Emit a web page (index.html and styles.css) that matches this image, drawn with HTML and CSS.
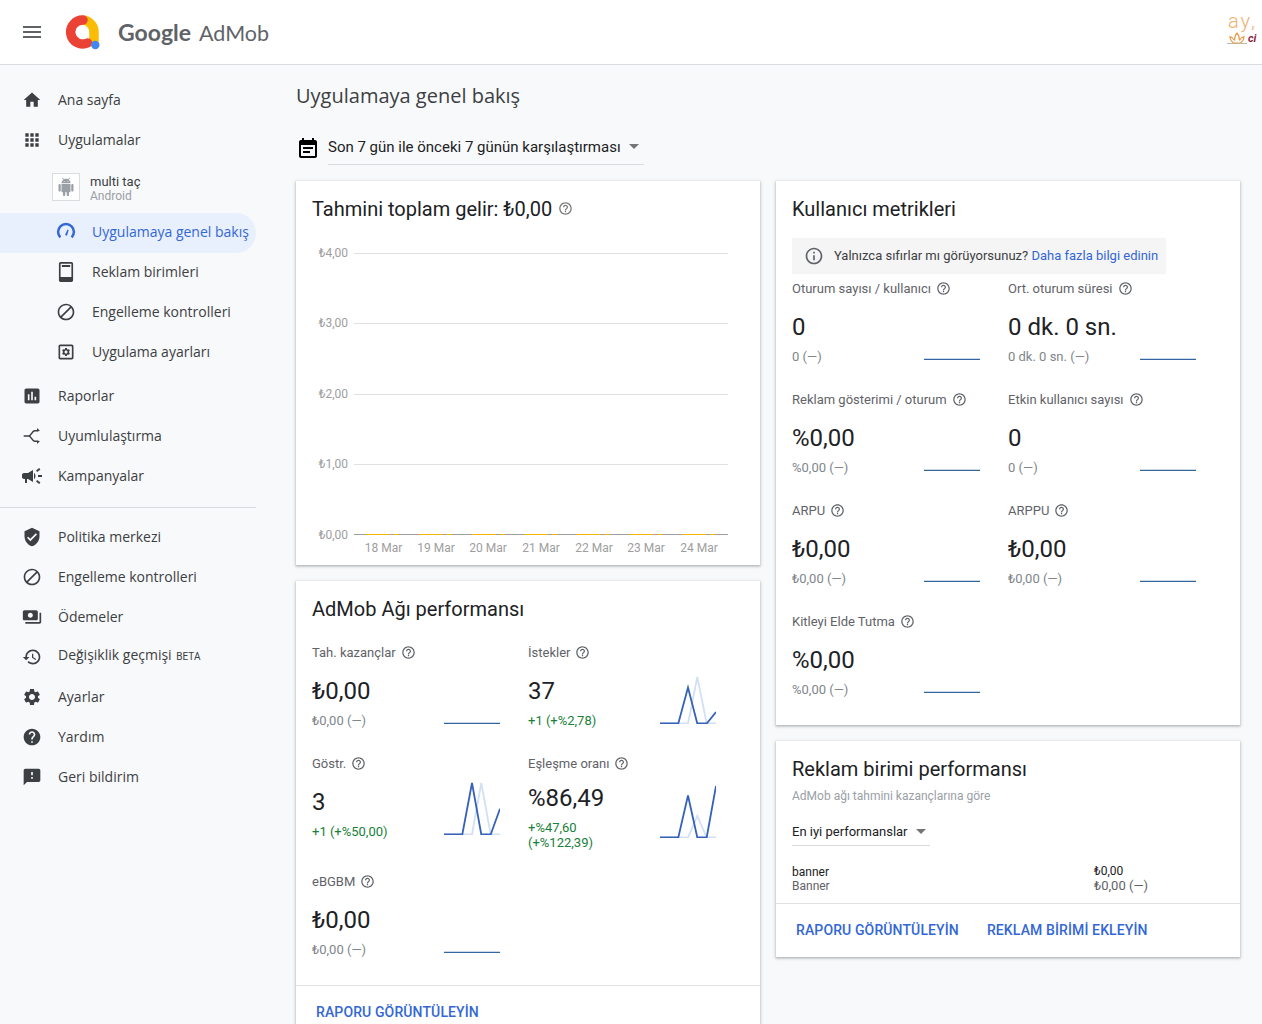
FILE: index.html
```html
<!DOCTYPE html>
<html lang="tr">
<head>
    <meta charset="UTF-8">
    <meta name="viewport" content="width=device-width, initial-scale=1.0">
    <title>Google AdMob</title>
    <link rel="stylesheet" href="styles.css">
</head>
<body>

    <svg class="sprite" width="0" height="0">
        <symbol id="i-help" viewBox="0 0 24 24"><path d="M11 18h2v-2h-2v2zm1-16C6.48 2 2 6.48 2 12s4.48 10 10 10 10-4.48 10-10S17.52 2 12 2zm0 18c-4.41 0-8-3.59-8-8s3.59-8 8-8 8 3.59 8 8-3.59 8-8 8zm0-14c-2.21 0-4 1.79-4 4h2c0-1.1.9-2 2-2s2 .9 2 2c0 2-3 1.75-3 5h2c0-2.25 3-2.5 3-5 0-2.21-1.79-4-4-4z"/></symbol>
        <symbol id="i-block" viewBox="0 0 24 24"><path d="M12 2C6.48 2 2 6.48 2 12s4.48 10 10 10 10-4.48 10-10S17.52 2 12 2zM4 12c0-4.42 3.58-8 8-8 1.85 0 3.55.63 4.9 1.69L5.69 16.9C4.63 15.55 4 13.85 4 12zm8 8c-1.85 0-3.55-.63-4.9-1.69L18.31 7.1C19.37 8.45 20 10.15 20 12c0 4.42-3.58 8-8 8z"/></symbol>
        <symbol id="i-gear" viewBox="0 0 24 24"><path d="M19.14 12.94c.04-.3.06-.61.06-.94 0-.32-.02-.64-.07-.94l2.03-1.58c.18-.14.23-.41.12-.61l-1.92-3.32c-.12-.22-.37-.29-.59-.22l-2.39.96c-.5-.38-1.03-.7-1.62-.94l-.36-2.54c-.04-.24-.24-.41-.48-.41h-3.84c-.24 0-.43.17-.47.41l-.36 2.54c-.59.24-1.13.57-1.62.94l-2.39-.96c-.22-.08-.47 0-.59.22L2.74 8.87c-.12.21-.08.47.12.61l2.03 1.58c-.05.3-.09.63-.09.94s.02.64.07.94l-2.03 1.58c-.18.14-.23.41-.12.61l1.92 3.32c.12.22.37.29.59.22l2.39-.96c.5.38 1.03.7 1.62.94l.36 2.54c.05.24.24.41.48.41h3.84c.24 0 .44-.17.47-.41l.36-2.54c.59-.24 1.13-.56 1.62-.94l2.39.96c.22.08.47 0 .59-.22l1.92-3.32c.12-.22.07-.47-.12-.61l-2.01-1.58zM12 15.6c-1.98 0-3.6-1.62-3.6-3.6s1.62-3.6 3.6-3.6 3.6 1.62 3.6 3.6-1.62 3.6-3.6 3.6z"/></symbol>
        <symbol id="s-flat" viewBox="0 0 56 55"><path class="spark-flat" d="M0 54.5H56"/></symbol>
    </svg>

    <header class="topbar">
        <svg class="menu-icon" viewBox="0 0 24 24"><path d="M3 18h18v-2H3v2zm0-5h18v-2H3v2zm0-7v2h18V6H3z"/></svg>
        <svg class="logo-mark" viewBox="0 0 36 36" fill="none">
            <path d="M17 6A12 12 0 0 1 29 18V29" stroke="#fbbc04" stroke-width="9.5"/>
            <path d="M18 6A12 12 0 1 0 22.5 29" stroke="#ea4335" stroke-width="9.5" stroke-linecap="round"/>
            <circle cx="30.3" cy="31" r="4.2" fill="#4285f4"/>
        </svg>
        <div class="logo-text"><span class="logo-google">Google</span> <span class="logo-admob">AdMob</span></div>
        <div class="avatar">
            <span class="avatar-text">ay,</span>
            <svg class="avatar-lotus" viewBox="0 0 20 13" fill="none">
                <path d="M0 11.500h20" stroke="#b9b9b9"/>
                <path d="M6.500 11C4 9 3 6 3 4.500 5 5 6.500 6.500 7.500 8.500 7.500 5.500 8.500 2.500 10 1c1.500 1.500 2.500 4.500 2.500 7.500C13.500 6.500 15 5 17 4.500 17 6 16 9 13.500 11z" stroke="#e9a04e" stroke-width="1.100"/>
            </svg>
            <span class="avatar-mark">ci</span>
        </div>
    </header>

    <div class="page">
        <nav class="sidebar">
            <a class="nav-item">
                <svg class="nav-icon" viewBox="0 0 24 24"><path d="M10 20v-6h4v6h5v-8h3L12 3 2 12h3v8z"/></svg>
                <span>Ana sayfa</span>
            </a>
            <a class="nav-item">
                <svg class="nav-icon" viewBox="0 0 24 24"><path d="M4 8h4V4H4v4zm6 12h4v-4h-4v4zm-6 0h4v-4H4v4zm0-6h4v-4H4v4zm6 0h4v-4h-4v4zm6-10v4h4V4h-4zm-6 4h4V4h-4v4zm6 6h4v-4h-4v4zm0 6h4v-4h-4v4z"/></svg>
                <span>Uygulamalar</span>
            </a>
            <div class="app-row">
                <div class="app-tile">
                    <svg viewBox="0 0 24 24"><path d="M6 18c0 .55.45 1 1 1h1v3.5c0 .83.67 1.5 1.5 1.5s1.5-.67 1.5-1.5V19h2v3.5c0 .83.67 1.5 1.5 1.5s1.5-.67 1.5-1.5V19h1c.55 0 1-.45 1-1V8H6v10zM3.5 8C2.67 8 2 8.67 2 9.5v7c0 .83.67 1.5 1.5 1.5S5 17.33 5 16.5v-7C5 8.67 4.33 8 3.5 8zm17 0c-.83 0-1.5.67-1.5 1.5v7c0 .83.67 1.5 1.5 1.5s1.5-.67 1.5-1.5v-7c0-.83-.67-1.5-1.5-1.5zm-4.97-5.84l1.3-1.3c.2-.2.2-.51 0-.71-.2-.2-.51-.2-.71 0l-1.48 1.48C13.85 1.23 12.95 1 12 1c-.96 0-1.86.23-2.66.63L7.85.15c-.2-.2-.51-.2-.71 0-.2.2-.2.51 0 .71l1.31 1.31C6.97 3.26 6 5.01 6 7h12c0-1.99-.97-3.75-2.47-4.84zM10 5H9V4h1v1zm5 0h-1V4h1v1z"/></svg>
                </div>
                <div class="app-name">
                    <div>multi taç</div>
                    <div class="app-platform">Android</div>
                </div>
            </div>
            <a class="nav-item sub active">
                <svg class="nav-icon line-icon" viewBox="0 0 24 24"><path d="M5.200 18.500a9.500 9.500 0 1 1 13.600 0" stroke="#3367d6" stroke-width="3"/><path class="needle" d="M10.800 15.500l3-6.500 1.400.6-2 6.800z"/></svg>
                <span>Uygulamaya genel bakış</span>
            </a>
            <a class="nav-item sub">
                <svg class="nav-icon" viewBox="0 0 24 24"><path d="M18.500 0h-13c-1.100 0-2 .9-2 2v20c0 1.100.9 2 2 2h13c1.100 0 2-.9 2-2V2c0-1.100-.9-2-2-2zm0 18h-13V2h13zM7 3.500h10v2.500H7z" fill-rule="evenodd"/></svg>
                <span>Reklam birimleri</span>
            </a>
            <a class="nav-item sub">
                <svg class="nav-icon"><use href="#i-block"/></svg>
                <span>Engelleme kontrolleri</span>
            </a>
            <a class="nav-item sub">
                <svg class="nav-icon" viewBox="0 0 24 24"><path d="M19 3H5c-1.100 0-2 .9-2 2v14c0 1.100.9 2 2 2h14c1.100 0 2-.9 2-2V5c0-1.100-.9-2-2-2zm0 16H5V5h14v14z"/><use href="#i-gear" x="6" y="6" width="12" height="12"/></svg>
                <span>Uygulama ayarları</span>
            </a>
            <a class="nav-item group-start">
                <svg class="nav-icon" viewBox="0 0 24 24"><path d="M19 3H5c-1.100 0-2 .9-2 2v14c0 1.100.9 2 2 2h14c1.100 0 2-.9 2-2V5c0-1.100-.9-2-2-2zM9 17H7v-7h2v7zm4 0h-2V7h2v10zm4 0h-2v-4h2v4z"/></svg>
                <span>Raporlar</span>
            </a>
            <a class="nav-item">
                <svg class="nav-icon line-icon" viewBox="0 0 24 24"><path d="M2 12h6c3 0 3.500-5 7-6.200h3M8 12c3 0 3.500 5 7 6.200h3" stroke="#3c4043" stroke-width="1.800"/><path class="arrow" d="M18 2.500l3.500 3.300-3.500 1.200zM18 17l3.500 1.200-3.500 3.300z"/></svg>
                <span>Uyumlulaştırma</span>
            </a>
            <a class="nav-item">
                <svg class="nav-icon" viewBox="2 2 20 20"><path d="M18 11v2h4v-2h-4zm-2 6.610c.96.71 2.210 1.650 3.200 2.390.4-.53.8-1.070 1.200-1.600-.99-.74-2.240-1.680-3.200-2.400-.4.54-.8 1.080-1.200 1.610zM20.400 5.600c-.4-.53-.8-1.070-1.200-1.600-.99.74-2.240 1.680-3.200 2.400.4.53.8 1.070 1.200 1.600.96-.72 2.210-1.650 3.200-2.400zM4 9c-1.100 0-2 .9-2 2v2c0 1.100.9 2 2 2h1v4h2v-4h1l5 3V6L8 9H4zm11.500 3c0-1.330-.58-2.530-1.500-3.350v6.690c.92-.81 1.500-2.010 1.500-3.340z"/></svg>
                <span>Kampanyalar</span>
            </a>
            <div class="nav-divider"></div>
            <a class="nav-item">
                <svg class="nav-icon" viewBox="0 0 24 24"><path d="M12 1L3 5v6c0 5.550 3.840 10.740 9 12 5.160-1.260 9-6.450 9-12V5l-9-4zm-2 16l-4-4 1.410-1.410L10 14.170l6.590-6.590L18 9l-8 8z"/></svg>
                <span>Politika merkezi</span>
            </a>
            <a class="nav-item">
                <svg class="nav-icon"><use href="#i-block"/></svg>
                <span>Engelleme kontrolleri</span>
            </a>
            <a class="nav-item">
                <svg class="nav-icon" viewBox="0 0 24 24"><path d="M19 14V6c0-1.100-.9-2-2-2H3c-1.100 0-2 .9-2 2v8c0 1.100.9 2 2 2h14c1.100 0 2-.9 2-2zm-9-1c-1.660 0-3-1.340-3-3s1.340-3 3-3 3 1.340 3 3-1.340 3-3 3zm13-6v11c0 1.100-.9 2-2 2H4v-2h17V7h2z"/></svg>
                <span>Ödemeler</span>
            </a>
            <a class="nav-item">
                <svg class="nav-icon" viewBox="0 0 24 24"><path d="M13 3c-4.970 0-9 4.030-9 9H1l3.890 3.890.07.14L9 12H6c0-3.870 3.130-7 7-7s7 3.130 7 7-3.130 7-7 7c-1.930 0-3.680-.79-4.940-2.060l-1.420 1.420C8.270 19.990 10.510 21 13 21c4.970 0 9-4.030 9-9s-4.030-9-9-9zm-1 5v5l4.280 2.540.72-1.210-3.500-2.080V8H12z"/></svg>
                <span class="raised">Değişiklik geçmişi <small class="beta">BETA</small></span>
            </a>
            <a class="nav-item">
                <svg class="nav-icon"><use href="#i-gear"/></svg>
                <span>Ayarlar</span>
            </a>
            <a class="nav-item">
                <svg class="nav-icon" viewBox="0 0 24 24"><path d="M12 2C6.480 2 2 6.480 2 12s4.480 10 10 10 10-4.480 10-10S17.520 2 12 2zm1 17h-2v-2h2v2zm2.070-7.750l-.9.92C13.450 12.900 13 13.500 13 15h-2v-.5c0-1.100.45-2.100 1.170-2.830l1.240-1.260c.37-.36.59-.86.59-1.410 0-1.100-.9-2-2-2s-2 .9-2 2H8c0-2.210 1.790-4 4-4s4 1.790 4 4c0 .88-.36 1.680-.93 2.250z"/></svg>
                <span>Yardım</span>
            </a>
            <a class="nav-item">
                <svg class="nav-icon" viewBox="0 0 24 24"><path d="M20 2H4c-1.100 0-1.990.9-1.990 2L2 22l4-4h14c1.100 0 2-.9 2-2V4c0-1.100-.9-2-2-2zm-7 12h-2v-2h2v2zm0-4h-2V6h2v4z"/></svg>
                <span>Geri bildirim</span>
            </a>
        </nav>

        <main class="content">
            <h1 class="page-title">Uygulamaya genel bakış</h1>
            <div class="date-row">
                <svg class="date-icon" viewBox="0 0 24 24"><path d="M17 10H7v2h10v-2zm2-7h-1V1h-2v2H8V1H6v2H5c-1.110 0-1.990.9-1.990 2L3 19c0 1.100.89 2 2 2h14c1.100 0 2-.9 2-2V5c0-1.100-.9-2-2-2zm0 16H5V8h14v11zm-5-5H7v2h7v-2z"/></svg>
                <div class="date-select">
                    <span>Son 7 gün ile önceki 7 günün karşılaştırması</span>
                    <i class="caret"></i>
                </div>
            </div>

            <div class="columns">
                <div class="column">
                    <section class="card">
                        <h2 class="card-title">Tahmini toplam gelir: ₺0,00 <svg class="title-help"><use href="#i-help"/></svg></h2>
                        <svg class="chart" viewBox="0 0 464 342">
                            <g class="grid-lines">
                                <path d="M58 30.500H432M58 100.500H432M58 171.500H432M58 241.500H432"/>
                            </g>
                            <path class="axis-line" d="M58 311.500H432"/>
                            <path class="rev-line" d="M69.700 311.500h24M97.700 311.500h5M122.800 311.500h24M150.800 311.500h5M175.700 311.500h24M203.700 311.500h5M228.300 311.500h24M256.300 311.500h5M280.700 311.500h24M308.700 311.500h5M333.300 311.500h24M361.300 311.500h5M386 311.500h24M414 311.500h5"/>
                            <g class="chart-y">
                                <text x="52" y="34">₺4,00</text>
                                <text x="52" y="104">₺3,00</text>
                                <text x="52" y="175">₺2,00</text>
                                <text x="52" y="245">₺1,00</text>
                                <text x="52" y="316">₺0,00</text>
                            </g>
                            <g class="chart-x">
                                <text x="87.500" y="329">18 Mar</text>
                                <text x="140" y="329">19 Mar</text>
                                <text x="192" y="329">20 Mar</text>
                                <text x="245" y="329">21 Mar</text>
                                <text x="298" y="329">22 Mar</text>
                                <text x="350" y="329">23 Mar</text>
                                <text x="403" y="329">24 Mar</text>
                            </g>
                        </svg>
                    </section>

                    <section class="card">
                        <h2 class="card-title network-title">AdMob Ağı performansı</h2>
                        <div class="metrics network-metrics">
                            <div class="metric">
                                <div class="metric-label">Tah. kazançlar <svg class="help"><use href="#i-help"/></svg></div>
                                <div class="metric-body">
                                    <div>
                                        <div class="metric-value">₺0,00</div>
                                        <div class="metric-sub">₺0,00 (—)</div>
                                    </div>
                                    <svg class="spark"><use href="#s-flat"/></svg>
                                </div>
                            </div>
                            <div class="metric">
                                <div class="metric-label">İstekler <svg class="help"><use href="#i-help"/></svg></div>
                                <div class="metric-body">
                                    <div>
                                        <div class="metric-value">37</div>
                                        <div class="metric-sub up">+1 (+%2,78)</div>
                                    </div>
                                    <svg class="spark" viewBox="0 0 56 55">
                                        <path class="spark-prev" d="M0 54.500H28L37.300 8 46.700 54.500H56"/>
                                        <path class="spark-line" d="M0 54.500H18.300L28 18.500 37.300 54.500H46.700L56 43"/>
                                    </svg>
                                </div>
                            </div>
                            <div class="metric">
                                <div class="metric-label">Göstr. <svg class="help"><use href="#i-help"/></svg></div>
                                <div class="metric-body">
                                    <div>
                                        <div class="metric-value">3</div>
                                        <div class="metric-sub up">+1 (+%50,00)</div>
                                    </div>
                                    <svg class="spark" viewBox="0 0 56 55">
                                        <path class="spark-prev" d="M0 54.500H28L37.300 3 46.700 54.500H56"/>
                                        <path class="spark-line" d="M0 54.500H18.300L28 3 37.300 54.500H46.700L56 28.700"/>
                                    </svg>
                                </div>
                            </div>
                            <div class="metric metric-wrapped">
                                <div class="metric-label">Eşleşme oranı <svg class="help"><use href="#i-help"/></svg></div>
                                <div class="metric-body">
                                    <div>
                                        <div class="metric-value">%86,49</div>
                                        <div class="metric-sub up">+%47,60<br>(+%122,39)</div>
                                    </div>
                                    <svg class="spark" viewBox="0 0 56 55">
                                        <path class="spark-prev" d="M0 54.500H28L37.300 33 46.700 54.500H56"/>
                                        <path class="spark-line" d="M0 54.500H18.300L28 12.500 37.300 54.500H46.700L56 3"/>
                                    </svg>
                                </div>
                            </div>
                            <div class="metric">
                                <div class="metric-label">eBGBM <svg class="help"><use href="#i-help"/></svg></div>
                                <div class="metric-body">
                                    <div>
                                        <div class="metric-value">₺0,00</div>
                                        <div class="metric-sub">₺0,00 (—)</div>
                                    </div>
                                    <svg class="spark"><use href="#s-flat"/></svg>
                                </div>
                            </div>
                        </div>
                        <div class="card-actions">
                            <a class="action">RAPORU GÖRÜNTÜLEYİN</a>
                        </div>
                    </section>
                </div>

                <div class="column">
                    <section class="card">
                        <h2 class="card-title">Kullanıcı metrikleri</h2>
                        <div class="notice">
                            <svg class="notice-icon" viewBox="0 0 24 24"><path d="M11 7h2v2h-2zm0 4h2v6h-2zm1-9C6.480 2 2 6.480 2 12s4.480 10 10 10 10-4.480 10-10S17.520 2 12 2zm0 18c-4.410 0-8-3.590-8-8s3.590-8 8-8 8 3.590 8 8-3.590 8-8 8z"/></svg>
                            <span>Yalnızca sıfırlar mı görüyorsunuz? <a class="notice-link">Daha fazla bilgi edinin</a></span>
                        </div>
                        <div class="metrics user-metrics">
                            <div class="metric">
                                <div class="metric-label">Oturum sayısı / kullanıcı <svg class="help"><use href="#i-help"/></svg></div>
                                <div class="metric-body">
                                    <div>
                                        <div class="metric-value">0</div>
                                        <div class="metric-sub">0 (—)</div>
                                    </div>
                                    <svg class="spark"><use href="#s-flat"/></svg>
                                </div>
                            </div>
                            <div class="metric">
                                <div class="metric-label">Ort. oturum süresi <svg class="help"><use href="#i-help"/></svg></div>
                                <div class="metric-body">
                                    <div>
                                        <div class="metric-value">0 dk. 0 sn.</div>
                                        <div class="metric-sub">0 dk. 0 sn. (—)</div>
                                    </div>
                                    <svg class="spark"><use href="#s-flat"/></svg>
                                </div>
                            </div>
                            <div class="metric">
                                <div class="metric-label">Reklam gösterimi / oturum <svg class="help"><use href="#i-help"/></svg></div>
                                <div class="metric-body">
                                    <div>
                                        <div class="metric-value">%0,00</div>
                                        <div class="metric-sub">%0,00 (—)</div>
                                    </div>
                                    <svg class="spark"><use href="#s-flat"/></svg>
                                </div>
                            </div>
                            <div class="metric">
                                <div class="metric-label">Etkin kullanıcı sayısı <svg class="help"><use href="#i-help"/></svg></div>
                                <div class="metric-body">
                                    <div>
                                        <div class="metric-value">0</div>
                                        <div class="metric-sub">0 (—)</div>
                                    </div>
                                    <svg class="spark"><use href="#s-flat"/></svg>
                                </div>
                            </div>
                            <div class="metric">
                                <div class="metric-label">ARPU <svg class="help"><use href="#i-help"/></svg></div>
                                <div class="metric-body">
                                    <div>
                                        <div class="metric-value">₺0,00</div>
                                        <div class="metric-sub">₺0,00 (—)</div>
                                    </div>
                                    <svg class="spark"><use href="#s-flat"/></svg>
                                </div>
                            </div>
                            <div class="metric">
                                <div class="metric-label">ARPPU <svg class="help"><use href="#i-help"/></svg></div>
                                <div class="metric-body">
                                    <div>
                                        <div class="metric-value">₺0,00</div>
                                        <div class="metric-sub">₺0,00 (—)</div>
                                    </div>
                                    <svg class="spark"><use href="#s-flat"/></svg>
                                </div>
                            </div>
                            <div class="metric">
                                <div class="metric-label">Kitleyi Elde Tutma <svg class="help"><use href="#i-help"/></svg></div>
                                <div class="metric-body">
                                    <div>
                                        <div class="metric-value">%0,00</div>
                                        <div class="metric-sub">%0,00 (—)</div>
                                    </div>
                                    <svg class="spark"><use href="#s-flat"/></svg>
                                </div>
                            </div>
                        </div>
                    </section>

                    <section class="card">
                        <h2 class="card-title">Reklam birimi performansı</h2>
                        <div class="card-subtitle">AdMob ağı tahmini kazançlarına göre</div>
                        <div class="unit-select">
                            <span>En iyi performanslar</span>
                            <i class="caret"></i>
                        </div>
                        <div class="unit-row">
                            <div class="unit-name">
                                <div>banner</div>
                                <div class="unit-type">Banner</div>
                            </div>
                            <div class="unit-value">
                                <div>₺0,00</div>
                                <div class="unit-prev">₺0,00 (—)</div>
                            </div>
                        </div>
                        <div class="card-actions">
                            <a class="action">RAPORU GÖRÜNTÜLEYİN</a>
                            <a class="action">REKLAM BİRİMİ EKLEYİN</a>
                        </div>
                    </section>
                </div>
            </div>
        </main>
    </div>

</body>
</html>
```

FILE: styles.css
```css
html, body {
    height: 100%;
}
body {
    margin: 0;
    height: 100vh;
    overflow: hidden;
    font-family: Roboto, "Liberation Sans", sans-serif;
    background-color: #f8f9fa;
    color: #202124;
}
.sprite {
    position: absolute;
}

/* top bar */
.topbar {
    display: flex;
    align-items: center;
    height: 64px;
    padding-left: 20px;
    background-color: white;
    border-bottom: 1px solid #dadce0;
}
.menu-icon {
    width: 24px;
    height: 24px;
    fill: #5f6368;
}
.logo-mark {
    width: 36px;
    height: 36px;
    margin-left: 21px;
}
.logo-text {
    margin-left: 17px;
    font-family: Lato, "Open Sans", sans-serif;
    font-size: 23px;
    color: #5f6368;
    white-space: nowrap;
}
.logo-google {
    font-weight: 700;
}
.logo-admob {
    margin-left: 2px;
    font-size: 21.5px;
}
.avatar {
    margin-left: auto;
    width: 36px;
    height: 44px;
    overflow: hidden;
    position: relative;
}
.avatar-text {
    position: absolute;
    left: 2px;
    top: 1px;
    font-size: 20px;
    line-height: 20px;
    font-weight: 300;
    letter-spacing: 2px;
    color: #f0b070;
}
.avatar-lotus {
    position: absolute;
    left: 1px;
    top: 22px;
    width: 20px;
    height: 13px;
}
.avatar-mark {
    position: absolute;
    left: 22px;
    top: 23px;
    font-size: 11px;
    line-height: 12px;
    font-weight: 700;
    font-style: italic;
    color: #8a1f3f;
}

.page {
    display: grid;
    grid-template-columns: 256px 1fr;
}

/* side menu */
.sidebar {
    padding-top: 15px;
}
.nav-item {
    display: flex;
    align-items: center;
    height: 40px;
    padding-left: 22px;
    font-family: "Open Sans", sans-serif;
    font-size: 14px;
    color: #3c4043;
}
.nav-item span {
    margin-bottom: 2px;
}
.nav-item .raised {
    margin-bottom: 6px;
}
.nav-item.sub {
    box-sizing: border-box;
    padding-left: 56px;
    padding-bottom: 2px;
}
.nav-item.active {
    background-color: #e8f0fe;
    border-radius: 0 20px 20px 0;
    color: #3367d6;
}
.nav-item.group-start {
    margin-top: 3px;
}
.nav-icon {
    flex: none;
    width: 20px;
    height: 20px;
    margin-right: 16px;
    fill: #3c4043;
}
.nav-icon.line-icon {
    fill: none;
}
.needle {
    fill: #3367d6;
}
.arrow {
    fill: #3c4043;
}
.beta {
    font-family: Roboto, sans-serif;
    font-size: 10px;
    margin-left: 1px;
}
.nav-divider {
    height: 1px;
    margin: 11px 0 9px;
    background-color: #dadce0;
}
.app-row {
    display: flex;
    align-items: center;
    height: 53px;
    padding-left: 52px;
    font-size: 13px;
    color: #3c4043;
}
.app-tile {
    box-sizing: border-box;
    width: 28px;
    height: 28px;
    margin: 1px 10px 0 0;
    padding: 4px;
    background-color: white;
    border: 1px solid #dadce0;
    fill: #9aa0a6;
}
.app-tile svg {
    display: block;
    width: 18px;
    height: 18px;
}
.app-name {
    margin-top: 5px;
    line-height: 15px;
}
.app-platform {
    font-size: 12px;
    color: #9aa0a6;
}

/* main area */
.content {
    padding: 17px 22px 0 40px;
}
.page-title {
    margin: 0;
    font-family: "Open Sans", sans-serif;
    font-size: 20px;
    line-height: 28px;
    font-weight: 400;
    color: #3c4043;
}
.date-row {
    display: flex;
    align-items: flex-end;
    margin-top: 20px;
}
.date-icon {
    width: 24px;
    height: 24px;
    margin: 0 8px 4px 0;
}
.date-select {
    display: flex;
    align-items: center;
    box-sizing: border-box;
    width: 316px;
    height: 35px;
    border-bottom: 1px solid #dadce0;
    padding-bottom: 1px;
    font-size: 15px;
}
.caret {
    width: 0;
    height: 0;
    margin-left: 8px;
    border-left: 5px solid transparent;
    border-right: 5px solid transparent;
    border-top: 5px solid #757575;
}
.columns {
    display: flex;
    gap: 16px;
    margin-top: 16px;
}
.column {
    display: flex;
    flex-direction: column;
    gap: 16px;
    width: 464px;
}
.card {
    background-color: white;
    box-shadow: 0 1px 2px rgba(60, 64, 67, 0.3), 0 1px 3px 1px rgba(60, 64, 67, 0.15);
}
.card-title {
    margin: 0;
    padding: 14px 16px 0;
    font-size: 20px;
    line-height: 28px;
    font-weight: 400;
}
.title-help {
    width: 15px;
    height: 15px;
    margin-left: 1px;
    fill: #757575;
}
.chart {
    display: block;
    width: 464px;
    height: 342px;
}
.grid-lines path {
    fill: none;
    stroke: #e0e0e0;
}
.axis-line {
    fill: none;
    stroke: #9e9e9e;
}
.rev-line {
    fill: none;
    stroke: #f4b400;
    stroke-width: 1;
}
.chart text {
    font-family: Roboto, sans-serif;
    font-size: 12px;
    fill: #9e9e9e;
}
.chart-y text {
    text-anchor: end;
}
.chart-x text {
    text-anchor: middle;
}

/* metric tiles */
.metrics {
    display: grid;
    grid-template-columns: 216px 216px;
    padding-left: 16px;
}
.network-title {
    padding-bottom: 19px;
}
.network-metrics {
    padding-bottom: 3px;
}
.user-metrics {
    margin-top: 4px;
    padding-bottom: 3px;
}
.metric {
    padding-bottom: 23px;
}
.metric-label {
    display: flex;
    align-items: center;
    height: 20px;
    font-size: 13px;
    color: #5f6368;
}
.help {
    width: 15px;
    height: 15px;
    margin-left: 5px;
    fill: #5f6368;
}
.metric-body {
    display: flex;
    justify-content: space-between;
    width: 188px;
}
.metric-value {
    margin-top: 13px;
    font-size: 24px;
    line-height: 32px;
}
.metric-sub {
    margin-top: 5px;
    font-size: 13px;
    line-height: 18px;
    color: #80868b;
}
.metric-sub.up {
    color: #188038;
}
.metric-wrapped {
    padding-bottom: 21px;
}
.metric-wrapped .metric-value {
    margin-top: 9px;
}
.metric-wrapped .metric-sub {
    margin-top: 6px;
    line-height: 15px;
}
.metric-wrapped .spark {
    margin-bottom: 12px;
}
.spark {
    flex: none;
    align-self: flex-end;
    width: 56px;
    height: 55px;
    margin-top: -10px;
    margin-bottom: 6px;
    fill: none;
}
.spark-flat {
    fill: none;
    stroke: #33659f;
    stroke-width: 1.3;
}
.spark-line {
    fill: none;
    stroke: #3561b8;
    stroke-width: 1.8;
}
.spark-prev {
    fill: none;
    stroke: #d2e0f5;
    stroke-width: 1.8;
}

.notice {
    display: flex;
    align-items: center;
    width: 374px;
    height: 36px;
    box-sizing: border-box;
    margin: 15px 0 0 16px;
    padding: 0 0 1px 12px;
    background-color: #f5f5f5;
    font-size: 13px;
    color: #3c4043;
}
.notice-icon {
    width: 20px;
    height: 20px;
    margin-right: 10px;
    fill: #5f6368;
}
.notice-link {
    color: #3367d6;
}

.card-subtitle {
    padding: 5px 16px 0;
    font-size: 12px;
    line-height: 16px;
    color: #9aa0a6;
}
.unit-select {
    display: flex;
    align-items: center;
    box-sizing: border-box;
    width: 138px;
    height: 30px;
    margin: 12px 0 0 16px;
    padding-top: 1px;
    border-bottom: 1px solid #dadce0;
    font-size: 13px;
}
.unit-row {
    display: flex;
    padding: 18px 16px 10px;
    font-size: 12px;
    line-height: 14px;
}
.unit-name {
    width: 302px;
    margin-top: 1px;
}
.unit-type {
    color: #5f6368;
}
.unit-prev {
    margin-top: 1px;
    font-size: 13px;
    color: #5f6368;
}
.card-actions {
    display: flex;
    gap: 28px;
    height: 53px;
    box-sizing: content-box;
    align-items: center;
    padding-left: 20px;
    border-top: 1px solid #e0e0e0;
}
.action {
    margin-bottom: 1px;
    font-size: 14px;
    font-weight: 500;
    letter-spacing: 0.12px;
    color: #3367d6;
}
```
